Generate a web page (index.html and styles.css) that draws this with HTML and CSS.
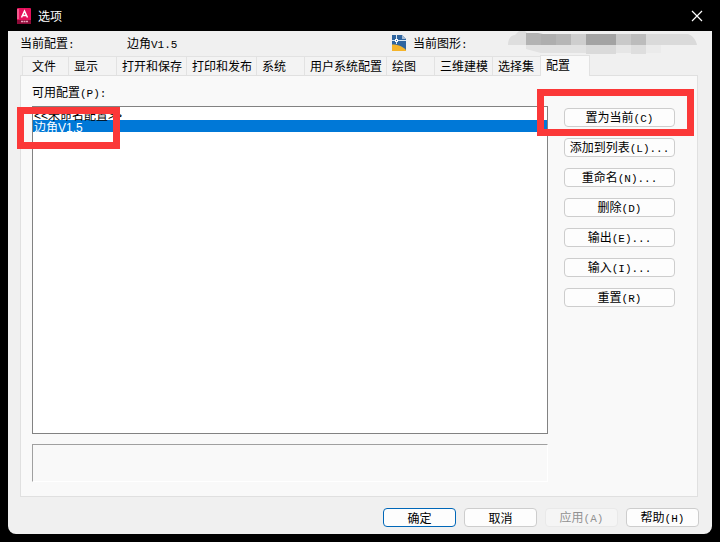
FILE: index.html
```html
<!DOCTYPE html>
<html lang="zh-CN">
<head>
    <meta charset="UTF-8">
    <meta name="viewport" content="width=device-width, initial-scale=1.0">
    <title>选项</title>
    <link rel="stylesheet" href="styles.css">
</head>
<body>

    <header class="titlebar">
        <svg class="app-icon" width="14" height="16" viewBox="0 0 14 16">
            <rect width="14" height="16" rx="1" fill="#e5115c"/>
            <path d="M0 1h2v10H0z" fill="#f25a8e"/>
            <path d="M0 12h14v4H0z" fill="#8d0b38"/>
            <path d="M4.500 9.500L7.500 3L10.500 9.500M5.500 7.500h4" fill="none" stroke="#fff" stroke-width="1.500"/>
            <path d="M4 13.500h7" stroke="#e9a3bb" stroke-width="1.500" stroke-dasharray="2 0.500"/>
        </svg>
        <h1>选项</h1>
        <button class="close-btn" aria-label="关闭">
            <svg width="12" height="12" viewBox="0 0 12 12"><path d="M1 1l10 10M11 1L1 11" stroke="#fff" stroke-width="1.2"/></svg>
        </button>
    </header>

    <main class="dialog">
        <div class="info">
            <span class="profile-label">当前配置<span class="en">:</span></span>
            <span class="profile-name">边角<span class="en">V1.5</span></span>
            <svg class="drawing-icon" width="14" height="16" viewBox="0 0 14 16">
                <path d="M0 0h10l4 4v12H0z" fill="#2f659f"/>
                <path d="M10 0l4 4h-4z" fill="#a8bdd3"/>
                <path d="M0 9.500c6 0 10 1.500 14 5.500v1H0z" fill="#f5b42a"/>
                <path d="M4.500 0v9M0 5.500h14" stroke="#dce8f3" stroke-width="1"/>
                <rect x="3.500" y="4.500" width="2" height="2" fill="#2f659f" stroke="#fff"/>
            </svg>
            <span>当前图形<span class="en">:</span></span>
            <svg class="masked" width="190" height="24" viewBox="0 0 190 24">
                <path d="M0 14c0-6 3-10 7-10l4-4h6l2 2v12z" fill="#dedede"/>
                <path d="M18 2h12l5 1v11H18z" fill="#b3b3b3"/>
                <path d="M33 3h15v11H33z" fill="#aeaeae"/>
                <path d="M48 3h15v11H48z" fill="#b6b6b6"/>
                <path d="M63 3h15v11H63z" fill="#cecece"/>
                <path d="M78 3h30v11H78z" fill="#a3a3a3"/>
                <path d="M108 3h15v11h-15z" fill="#c9c9c9"/>
                <path d="M123 3h15v11h-15z" fill="#bcbcbc"/>
                <path d="M138 3h42c5 2 8 6 9 11h-51z" fill="#dadada"/>
                <path d="M18 14h60v8H33l-15-4z" fill="#e2e2e2"/>
                <path d="M78 14h30v9H78z" fill="#dadada"/>
                <path d="M108 14h15v8h-15z" fill="#e6e6e6"/>
                <path d="M123 14h15v9h-15z" fill="#dedede"/>
                <path d="M138 14h15v8h-15z" fill="#ebebeb"/>
            </svg>
        </div>

        <nav class="tabs" role="tablist">
            <button class="tab w46 first" role="tab">文件</button>
            <button class="tab w48" role="tab">显示</button>
            <button class="tab w70" role="tab">打开和保存</button>
            <button class="tab w70" role="tab">打印和发布</button>
            <button class="tab w48" role="tab">系统</button>
            <button class="tab w82" role="tab">用户系统配置</button>
            <button class="tab w48" role="tab">绘图</button>
            <button class="tab w58" role="tab">三维建模</button>
            <button class="tab w48" role="tab">选择集</button>
            <button class="tab w50 active" role="tab" aria-selected="true">配置</button>
        </nav>

        <section class="panel">
            <div class="profiles">
                <label for="profileList">可用配置<span class="en">(P):</span></label>
                <div class="list-wrap">
                    <select id="profileList" class="profile-list" size="2">
                        <option>&lt;&lt;未命名配置&gt;&gt;</option>
                        <option selected>边角V1.5</option>
                    </select>
                    <div class="mark mark-list"></div>
                </div>
                <div class="description"></div>
            </div>
            <div class="actions">
                <div class="current-wrap">
                    <button class="btn">置为当前<span class="en">(C)</span></button>
                    <div class="mark mark-current"></div>
                </div>
                <button class="btn">添加到列表<span class="en">(L)...</span></button>
                <button class="btn">重命名<span class="en">(N)...</span></button>
                <button class="btn">删除<span class="en">(D)</span></button>
                <button class="btn">输出<span class="en">(E)...</span></button>
                <button class="btn">输入<span class="en">(I)...</span></button>
                <button class="btn">重置<span class="en">(R)</span></button>
            </div>
        </section>

        <footer class="footer">
            <button class="btn default">确定</button>
            <button class="btn">取消</button>
            <button class="btn" disabled>应用<span class="en">(A)</span></button>
            <button class="btn">帮助<span class="en">(H)</span></button>
        </footer>
    </main>

</body>
</html>
```
FILE: styles.css
```css
* {
    box-sizing: border-box;
}
body {
    margin: 0;
    padding: 0 8px 8px;
    height: 100vh;
    display: flex;
    flex-direction: column;
    background: #000;
    color: #000;
    font: 12px/14px "Noto Sans CJK SC", sans-serif;
}
button {
    font: inherit;
    color: inherit;
    white-space: nowrap;
}
/* half-width latin next to the 12px chinese text */
.en {
    font-family: "Liberation Mono", monospace;
    font-size: 11px;
    line-height: 12px;
}

/* title bar */
.titlebar {
    height: 31px;
    padding: 0 9px;
    display: flex;
    align-items: center;
    gap: 7px;
    color: #fff;
}
.titlebar h1 {
    margin: 0;
    flex: 1;
    font-size: 12px;
    font-weight: normal;
}
.close-btn {
    display: flex;
    padding: 0;
    border: none;
    background: none;
}

.dialog {
    flex: 1;
    display: flex;
    flex-direction: column;
    padding: 0 14px 7px 12px;
    background: #f0f0f0;
    border-radius: 0 0 8px 8px;
}
.info {
    display: flex;
    align-items: center;
    height: 24px;
}
.profile-label {
    width: 107px;
}
.profile-name {
    width: 265px;
}
.drawing-icon {
    margin-right: 7px;
}
.masked {
    margin: 0 0 0 auto;
    align-self: flex-start;
}

/* tabs */
.tabs {
    display: flex;
    align-items: flex-end;
    height: 20px;
    padding-left: 2px;
}
.tab {
    height: 19px;
    padding: 0 0 0 5px;
    border: 1px solid #e2e2e2;
    border-width: 1px 0 0 1px;
    background: #f3f3f3;
    text-align: left;
}
.tab.first {
    padding-left: 9px;
}
.tab.active {
    position: relative;
    height: 21px;
    margin-bottom: -1px;
    padding-bottom: 3px;
    border-right-width: 1px;
    background: #f9f9f9;
}
.w46 { width: 46px; }
.w48 { width: 48px; }
.w50 { width: 50px; }
.w58 { width: 58px; }
.w70 { width: 70px; }
.w82 { width: 82px; }

.panel {
    flex: 1;
    display: flex;
    gap: 16px;
    padding: 9px 22px 14px 11px;
    border: 1px solid #e0e0e0;
    background: #f9f9f9;
}
.profiles {
    flex: 1;
    display: flex;
    flex-direction: column;
}
.list-wrap {
    position: relative;
    flex: 1;
    display: flex;
    margin: 6px 0 10px;
}
.profile-list {
    flex: 1;
    width: 100%;
    padding: 1px 0;
    border: 1px solid #828282;
    border-radius: 0;
    outline: none;
    background: #fff;
    overflow: hidden;
    font: 12px/12px "Liberation Sans", "Noto Sans CJK SC", sans-serif;
}
.profile-list option {
    display: flex;
    align-items: center;
    height: 12px;
    min-height: 12px;
    padding: 0 1px;
}
.profile-list option:checked {
    background: #0078d7 linear-gradient(#0078d7, #0078d7);
    color: #fff;
}
.description {
    height: 38px;
    border: 1px solid #a0a0a0;
    border-right-color: #fff;
    border-bottom-color: #fff;
}

/* buttons */
.actions {
    width: 111px;
    display: flex;
    flex-direction: column;
    gap: 11px;
    padding-top: 23px;
}
.current-wrap {
    position: relative;
    display: grid;
}
.btn {
    height: 19px;
    padding: 0;
    border: 1px solid #cdcdcd;
    border-radius: 4px;
    background: #fdfdfd;
    line-height: 14px;
}
.btn.default {
    border-color: #0067b8;
}
.btn:disabled {
    border-color: #e9e9e9;
    background: #f5f5f5;
    color: #929292;
}
.footer {
    display: flex;
    justify-content: flex-end;
    gap: 8px;
    padding-top: 11px;
    margin-right: -1px;
}
.footer .btn {
    width: 73px;
}

/* red highlight frames */
.mark {
    position: absolute;
    border: 7px solid #fb3838;
    pointer-events: none;
}
.mark-list {
    left: -15px;
    top: 1px;
    width: 103px;
    height: 42px;
}
.mark-current {
    left: -27px;
    top: -19px;
    width: 157px;
    height: 47px;
}
```
